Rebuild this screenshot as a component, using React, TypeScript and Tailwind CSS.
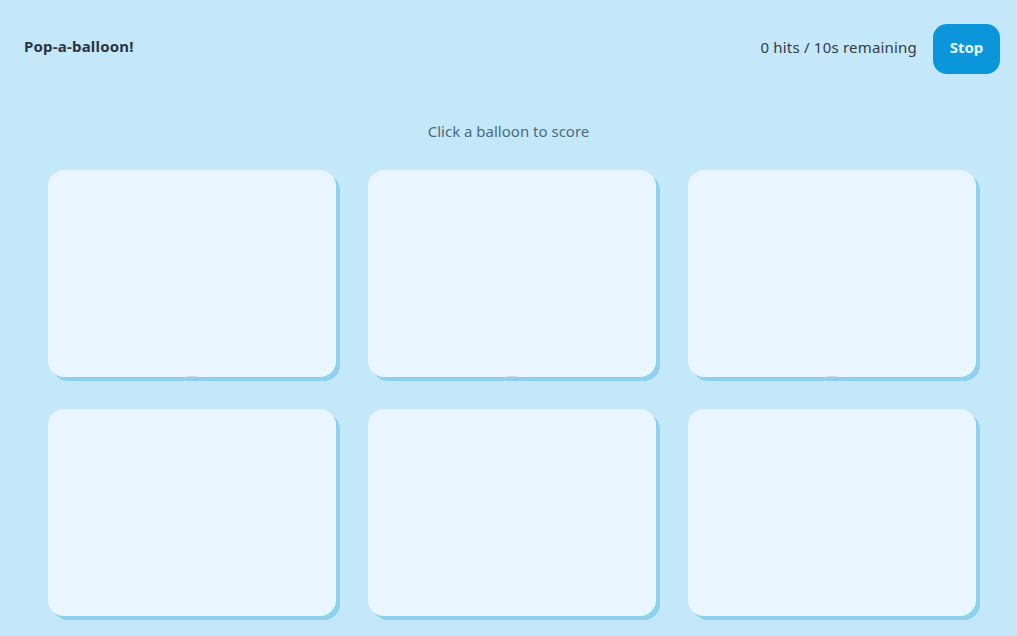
import React from 'react'

const cards = [0, 1, 2, 3, 4, 5]

export default function App() {
  return (
    <div
      className="w-[1017px] h-[636px] overflow-hidden bg-[#c4e7fa] text-[#2c3440]"
      style={{ fontFamily: '"Noto Sans", "Open Sans", sans-serif' }}
    >
      <header className="flex items-center justify-between pl-6 pr-[17px] pt-6">
        <h1 className="mb-[5px] text-[15px] font-bold tracking-[0.2px] text-[#2b3542]">Pop-a-balloon!</h1>
        <div className="flex items-center gap-4">
          <span className="mb-[4px] text-[15px] tracking-[0.2px] text-[#333b45]">0 hits / 10s remaining</span>
          <button className="w-[67px] h-[50px] rounded-[14px] bg-[#0b96dc] pb-[4px] text-[15px] font-bold text-[#e6f6ff]">
            Stop
          </button>
        </div>
      </header>

      <p className="mt-[46px] text-center text-[15px] text-[#4b6a80]">Click a balloon to score</p>

      <div className="ml-12 mt-[27px] grid w-[928px] grid-cols-3 gap-8">
        {cards.map(i => (
          <div
            key={i}
            className="relative h-[207px] overflow-hidden rounded-[16px] bg-[#e9f6ff] shadow-[4px_4px_0_#8fd0ee]"
          >
            {i < 3 && (
              <div className="absolute left-1/2 bottom-[-12px] h-[13px] w-[18px] -translate-x-1/2 rounded-full bg-[#d6d3f5]" />
            )}
          </div>
        ))}
      </div>
    </div>
  )
}
